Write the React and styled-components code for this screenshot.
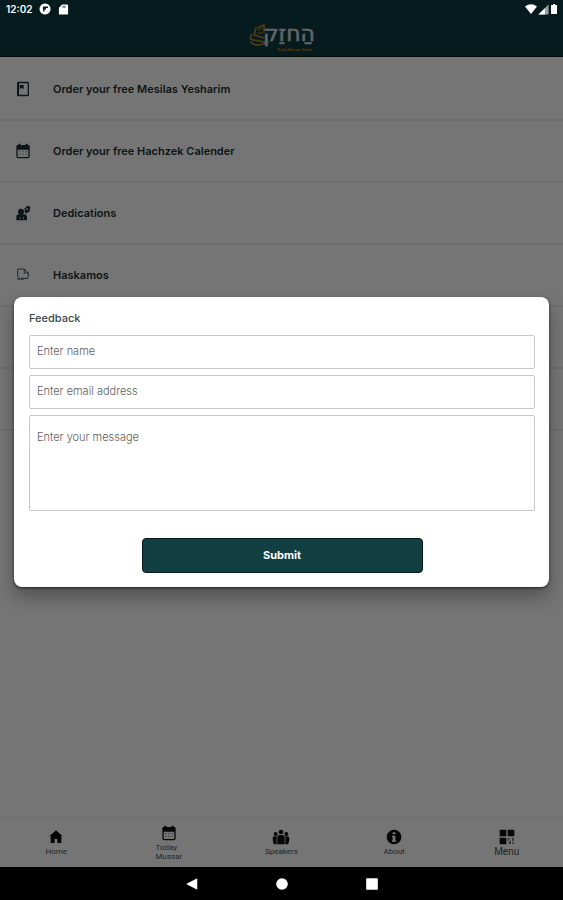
import React from 'react';
import styled, { createGlobalStyle } from 'styled-components'

const GlobalStyle = createGlobalStyle`
    * {
        box-sizing: border-box;
    }

    body {
        margin: 0;
        background: #000;
        font-family: Inter, Roboto, sans-serif;
    }
`

const Screen = styled.div`
    display: flex;
    flex-direction: column;
    min-height: 100vh;
`

const AppArea = styled.div`
    position: relative;
    flex: 1;
    display: flex;
    flex-direction: column;
    background: white;
`

const Header = styled.header`
    display: flex;
    flex-direction: column;
    background: #0f3b40;
    border-bottom: 1px solid #001014;
`

const StatusBar = styled.div`
    position: relative;
    z-index: 2;
    display: flex;
    align-items: center;
    justify-content: space-between;
    height: 18px;
    padding: 0 5px 0 6px;
    color: white;
    font-size: 10px;
    font-weight: 600;
`

const StatusGroup = styled.div`
    display: flex;
    align-items: center;
    gap: ${(props) => props.$gap};
`

const LogoBar = styled.div`
    display: flex;
    justify-content: center;
    height: 38px;
    padding-top: 2px;
`

const MenuList = styled.ul`
    flex: 1;
    margin: 0;
    padding: 2px 0 0;
    list-style: none;
`

const MenuRow = styled.li`
    height: 62px;
    border-bottom: 2px solid #efefef;
`

const MenuLink = styled.a`
    display: flex;
    align-items: center;
    gap: 22px;
    height: 100%;
    padding: 0 15px;
    color: #1c3134;
    font-size: 11px;
    font-weight: 600;
    text-decoration: none;
`

const BottomTabs = styled.nav`
    display: grid;
    grid-template-columns: repeat(5, 1fr);
    height: 50px;
    border-top: 1px solid #f2f2f2;
`

const Tab = styled.a`
    display: flex;
    flex-direction: column;
    align-items: center;
    justify-content: center;
    gap: 2px;
    color: #111;
    text-decoration: none;
`

const TabLabel = styled.span`
    width: min-content;
    color: #505050;
    font-family: Roboto, sans-serif;
    font-size: ${(props) => (props.$active ? '10px' : '8px')};
    line-height: 9px;
`

const Backdrop = styled.div`
    position: absolute;
    inset: 0;
    z-index: 1;
    display: flex;
    align-items: center;
    padding: 16px 14px 0;
    background: rgba(0, 0, 0, 0.54);
`

const Dialog = styled.form`
    display: flex;
    flex-direction: column;
    gap: 6px;
    width: 100%;
    padding: 14px 14px 14px 15px;
    border-radius: 8px;
    background: white;
    box-shadow: 0 10px 18px rgba(0, 0, 0, 0.3), 0 1px 3px rgba(0, 0, 0, 0.6);
`

const Title = styled.h2`
    margin: 0 0 4px;
    color: #3c4648;
    font-size: 11px;
    font-weight: 500;
    line-height: 14px;
`

const Field = styled.input`
    width: 100%;
    height: 34px;
    padding: 0 7px 2px;
    border: 1px solid #c8c8c8;
    border-radius: 2px;
    background: white;
    font-family: inherit;
    font-size: 11px;
    font-weight: 300;

    &::placeholder {
        color: #606060;
        opacity: 1;
    }
`

const MessageField = styled(Field)`
    display: block;
    height: 96px;
    padding: 14px 7px;
    line-height: 14px;
    resize: none;
`

const SubmitButton = styled.button`
    align-self: center;
    width: 281px;
    max-width: 100%;
    height: 35px;
    margin-top: 21px;
    border: 1px solid #06191b;
    border-radius: 4px;
    background: #123f42;
    color: white;
    font-family: inherit;
    font-size: 11px;
    font-weight: 700;
`

const SystemBar = styled.div`
    display: flex;
    align-items: center;
    justify-content: center;
    gap: 76px;
    height: 33px;
    background: black;
`

const SystemButton = styled.button`
    display: flex;
    padding: 0;
    border: 0;
    background: none;
    color: white;
`

const Icon = ({ size = 16, children }) => (
    <svg width={size} height={size} viewBox="0 0 24 24" fill="currentColor" aria-hidden="true">
        {children}
    </svg>
)

const BookIcon = () => (
    <Icon>
        <path fillRule="evenodd" d="M5 1h14a2 2 0 0 1 2 2v18a2 2 0 0 1-2 2H5a2 2 0 0 1-2-2V3a2 2 0 0 1 2-2zm1 2.500v17h13v-17z" />
        <path d="M7 6h6v6l-3-1.500L7 12z" />
    </Icon>
)

const CalendarIcon = () => (
    <Icon>
        <path fillRule="evenodd" d="M5 1h3v2h8V1h3v2h1a2 2 0 0 1 2 2v15a3 3 0 0 1-3 3H5a3 3 0 0 1-3-3V5a2 2 0 0 1 2-2h1zM4 10v10q0 1 1 1h14q1 0 1-1V10z" />
        <path d="M6 12h2v2H6zm5 0h2v2h-2zm5 0h2v2h-2zM6 16h2v2H6zm5 0h2v2h-2zm5 0h2v2h-2z" opacity="0.5" />
    </Icon>
)

const DedicationIcon = () => (
    <Icon>
        <circle cx="9" cy="10" r="4.500" />
        <path fillRule="evenodd" d="M2 23v-5q0-4 4-4h7q5 0 5 4v5zm5-5v3h1v-3zm5 0v3h1v-3z" />
        <path fillRule="evenodd" d="M18 1l2 1 2 0 1 3-1 2 0 3-3 1-2 2-3-3 1-2-1-3 2-1zm0 4a1.200 1.200 0 1 0 .1 0z" />
    </Icon>
)

const FileIcon = () => (
    <Icon>
        <path d="M4 15V3h10l6 6v6M14 3v6h6" fill="none" stroke="currentColor" strokeWidth="1.500" opacity="0.8" />
        <path d="M4 16h4v3H4zm5 0h4v3H9zm5 0h6v2h-6z" opacity="0.8" />
    </Icon>
)

const HomeIcon = () => (
    <Icon>
        <path d="M12 2l10 9h-2v10h-6v-6h-4v6H4V11H2z" />
    </Icon>
)

const SpeakersIcon = () => (
    <svg width="18" height="16" viewBox="0 0 27 24" fill="currentColor" aria-hidden="true">
        <circle cx="13.500" cy="4.500" r="3.500" />
        <circle cx="5.500" cy="7.500" r="3" />
        <circle cx="21.500" cy="7.500" r="3" />
        <path d="M8 12q0-3 3-3h5q3 0 3 3v11H8zM1 14q0-3 3-3h3v12H3q-2-3-2-9zm25 0q0-3-3-3h-3v12h4q2-3 2-9z" />
    </svg>
)

const InfoIcon = () => (
    <Icon>
        <path fillRule="evenodd" d="M12 1a11 11 0 1 0 .1 0zM10 5h4v3h-4zM9 10h5v7h1v2H9v-2h1v-5H9z" />
    </Icon>
)

const GridIcon = () => (
    <Icon>
        <path d="M1 1h10v10H1zm12 0h10v10H13zM1 13h10v10H1z" />
        <path d="M13 14h4l-3 4h-1zm6-1h3v5h-2zm-4 6l3-2v5h-4zm5 0h2v4h-2z" opacity="0.6" />
    </Icon>
)

const Logo = () => (
    <svg width="70" height="34" viewBox="0 0 70 34" role="img" aria-label="החזק">
        <g fill="none" stroke="#b58328" strokeWidth="1.600">
            <path d="M9 8L7 15l10 3M10 8l7-3v8" />
            <path d="M5 14q-4 4 1 6l12 2M4 21q0 4 8 4l10-3" />
            <path d="M11 10l5-2M10 13l6 0" strokeWidth="1" />
        </g>
        <text
            x="42"
            y="21"
            textAnchor="middle"
            fill="#d5dadd"
            stroke="#d5dadd"
            strokeWidth="0.600"
            fontFamily="'DejaVu Sans', sans-serif"
            fontSize="22"
        >
            הַחזֵק
        </text>
        <text x="48" y="31" textAnchor="middle" fill="#b77a20" fontFamily="Roboto, sans-serif" fontSize="4" fontWeight="700">Daily Mussar Seder</text>
    </svg>
)

const menuItems = [
    { label: 'Order your free Mesilas Yesharim', icon: <BookIcon /> },
    { label: 'Order your free Hachzek Calender', icon: <CalendarIcon /> },
    { label: 'Dedications', icon: <DedicationIcon /> },
    { label: 'Haskamos', icon: <FileIcon /> },
]

const tabs = [
    { label: 'Home', icon: <HomeIcon /> },
    { label: 'Today Mussar', icon: <CalendarIcon /> },
    { label: 'Speakers', icon: <SpeakersIcon /> },
    { label: 'About', icon: <InfoIcon /> },
    { label: 'Menu', icon: <GridIcon />, active: true },
]

class App extends React.Component {

    state = {
        name: '',
        email: '',
        message: ''
    }

    onChangeField = (event) => {
        this.setState({ [event.target.name]: event.target.value });
    };

    onSubmit = (event) => {
        event.preventDefault();
        this.setState({ name: '', email: '', message: '' });
    };

    render() {
        return (
            <Screen>
                <GlobalStyle />
                <AppArea>
                    <Header>
                        <StatusBar>
                            <StatusGroup $gap="7px">
                                <span>12:02</span>
                                <Icon size={12}>
                                    <path fillRule="evenodd" d="M12 1a11 11 0 1 0 .1 0zM8 7h10v3h-4v3h-3v4H8z" />
                                </Icon>
                                <Icon size={11}>
                                    <path fillRule="evenodd" d="M9 1h11q2 0 2 2v18q0 2-2 2H4q-2 0-2-2V8zm1 3v4h2V4zm4 0v4h2V4z" />
                                </Icon>
                            </StatusGroup>
                            <StatusGroup $gap="1px">
                                <Icon size={12}>
                                    <path d="M12 22L0 7q12-9 24 0z" />
                                </Icon>
                                <Icon size={11}>
                                    <path d="M23 1v22H1z" opacity="0.6" />
                                    <path d="M15 9v14H1z" />
                                </Icon>
                                <svg width="8" height="12" viewBox="0 0 8 12" fill="currentColor" aria-hidden="true">
                                    <path d="M3 1h2v1h2v9H1V2h2z" />
                                </svg>
                            </StatusGroup>
                        </StatusBar>
                        <LogoBar>
                            <Logo />
                        </LogoBar>
                    </Header>

                    <MenuList>
                        {menuItems.map((item) => (
                            <MenuRow key={item.label}>
                                <MenuLink href="#">
                                    {item.icon}
                                    {item.label}
                                </MenuLink>
                            </MenuRow>
                        ))}
                        <MenuRow />
                        <MenuRow />
                    </MenuList>

                    <BottomTabs>
                        {tabs.map((tab) => (
                            <Tab href="#" key={tab.label}>
                                {tab.icon}
                                <TabLabel $active={tab.active}>{tab.label}</TabLabel>
                            </Tab>
                        ))}
                    </BottomTabs>

                    <Backdrop>
                        <Dialog role="dialog" aria-labelledby="feedback-title" onSubmit={this.onSubmit}>
                            <Title id="feedback-title">Feedback</Title>
                            <Field
                                name="name"
                                aria-label="Enter name"
                                placeholder="Enter name"
                                value={this.state.name}
                                onChange={this.onChangeField}
                            />
                            <Field
                                name="email"
                                type="email"
                                aria-label="Enter email address"
                                placeholder="Enter email address"
                                value={this.state.email}
                                onChange={this.onChangeField}
                            />
                            <MessageField
                                as="textarea"
                                name="message"
                                aria-label="Enter your message"
                                placeholder="Enter your message"
                                value={this.state.message}
                                onChange={this.onChangeField}
                            />
                            <SubmitButton type="submit">Submit</SubmitButton>
                        </Dialog>
                    </Backdrop>
                </AppArea>

                <SystemBar>
                    <SystemButton aria-label="Back">
                        <Icon size={14}><path d="M21 2v20L2 12z" /></Icon>
                    </SystemButton>
                    <SystemButton aria-label="Home screen">
                        <Icon size={14}><circle cx="12" cy="12" r="10" /></Icon>
                    </SystemButton>
                    <SystemButton aria-label="Recent apps">
                        <Icon size={14}><rect x="2" y="2" width="20" height="20" rx="1" /></Icon>
                    </SystemButton>
                </SystemBar>
            </Screen>
        )
    }
}

export default App
